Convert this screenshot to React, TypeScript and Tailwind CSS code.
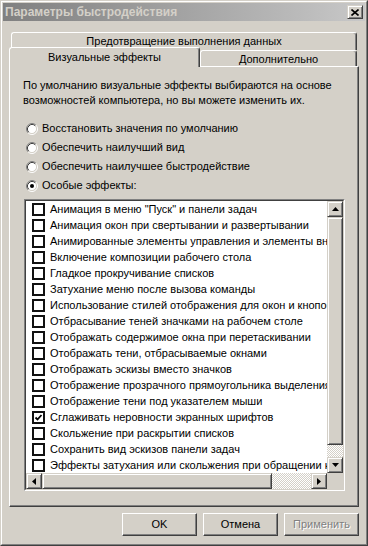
import React from "react";

const raisedBtn =
  "border border-t-white border-l-white border-r-[#404040] border-b-[#404040] shadow-[inset_-1px_-1px_#808080]";
const raisedBar =
  "border border-t-[#d4d0c8] border-l-[#d4d0c8] border-r-[#404040] border-b-[#404040] shadow-[inset_1px_1px_#ffffff,inset_-1px_-1px_#808080]";
const dither =
  "bg-[image:repeating-conic-gradient(#ffffff_0%_25%,#d4d0c8_0%_50%)] bg-[length:2px_2px]";

const items: [string, boolean][] = [
  ["Анимация в меню \"Пуск\" и панели задач", false],
  ["Анимация окон при свертывании и развертывании", false],
  ["Анимированные элементы управления и элементы внутри окна", false],
  ["Включение композиции рабочего стола", false],
  ["Гладкое прокручивание списков", false],
  ["Затухание меню после вызова команды", false],
  ["Использование стилей отображения для окон и кнопок", false],
  ["Отбрасывание теней значками на рабочем столе", false],
  ["Отображать содержимое окна при перетаскивании", false],
  ["Отображать тени, отбрасываемые окнами", false],
  ["Отображать эскизы вместо значков", false],
  ["Отображение прозрачного прямоугольника выделения", false],
  ["Отображение тени под указателем мыши", false],
  ["Сглаживать неровности экранных шрифтов", true],
  ["Скольжение при раскрытии списков", false],
  ["Сохранить вид эскизов панели задач", false],
  ["Эффекты затухания или скольжения при обращении к меню", false],
];

function Radio({ checked }: { checked?: boolean }) {
  const a = 3.89;
  const b = 3.18;
  return (
    <svg width="12" height="12" viewBox="0 0 12 12" className="shrink-0">
      <circle cx="6" cy="6" r="4.5" fill="#ffffff" />
      <path d={`M${6 - a} ${6 + a} A5.5 5.5 0 0 1 ${6 + a} ${6 - a}`} fill="none" stroke="#808080" strokeWidth="1" />
      <path d={`M${6 + a} ${6 - a} A5.5 5.5 0 0 1 ${6 - a} ${6 + a}`} fill="none" stroke="#ffffff" strokeWidth="1" />
      <path d={`M${6 - b} ${6 + b} A4.5 4.5 0 0 1 ${6 + b} ${6 - b}`} fill="none" stroke="#404040" strokeWidth="1" />
      <path d={`M${6 + b} ${6 - b} A4.5 4.5 0 0 1 ${6 - b} ${6 + b}`} fill="none" stroke="#d4d0c8" strokeWidth="1" />
      {checked && <circle cx="6" cy="6" r="2" fill="#000000" />}
    </svg>
  );
}

function Check({ checked }: { checked: boolean }) {
  return (
    <div className="w-[13px] h-[13px] shrink-0 border-2 border-[#111111] bg-white flex items-center justify-center">
      {checked && (
        <svg width="9" height="9" viewBox="0 0 9 9">
          <path d="M1.5 4.5 L3.5 6.5 L7.5 2" fill="none" stroke="#000" strokeWidth="1.8" />
        </svg>
      )}
    </div>
  );
}

function Arrow({ dir }: { dir: "up" | "down" | "left" | "right" }) {
  const pts =
    dir === "up"
      ? "0,4 7,4 3.5,0"
      : dir === "down"
      ? "0,0 7,0 3.5,4"
      : dir === "left"
      ? "4,0 4,7 0,3.5"
      : "0,0 0,7 4,3.5";
  const w = dir === "up" || dir === "down" ? 7 : 4;
  const h = dir === "up" || dir === "down" ? 4 : 7;
  return (
    <svg width={w} height={h} viewBox={`0 0 ${w} ${h}`}>
      <polygon points={pts} fill="#000" />
    </svg>
  );
}

function SBtn({ dir }: { dir: "up" | "down" | "left" | "right" }) {
  return (
    <div className={`w-[16px] h-[16px] shrink-0 bg-[#d4d0c8] flex items-center justify-center ${raisedBar}`}>
      <Arrow dir={dir} />
    </div>
  );
}

export default function App() {
  return (
    <div className="w-[368px] h-[546px] bg-[#d4d0c8] font-['Liberation_Sans',Arial,sans-serif] text-[11px] text-black border border-t-[#d4d0c8] border-l-[#d4d0c8] border-r-[#404040] border-b-[#404040] overflow-hidden">
      <div className="w-full h-full border border-t-white border-l-white border-r-[#808080] border-b-[#808080] p-px flex flex-col">
        {/* Title bar */}
        <div className="h-[18px] shrink-0 bg-linear-to-r from-[#808080] to-[#c8c8c8] flex items-center pl-[2px] pr-[2px]">
          <span className="font-bold text-[#d4d0c8] text-[12px] leading-none flex-1">Параметры быстродействия</span>
          <div className={`w-[16px] h-[14px] bg-[#d4d0c8] flex items-center justify-center ${raisedBar}`}>
            <svg width="8" height="7" viewBox="0 0 8 7">
              <path d="M0.5 0.5 L7.5 6.5 M7.5 0.5 L0.5 6.5" stroke="#000" strokeWidth="1.6" fill="none" />
            </svg>
          </div>
        </div>

        {/* Body */}
        <div className="flex-1 flex flex-col px-[6px]">
          {/* Back tab row */}
          <div className="mt-[11px] px-[2px]">
            <div className="h-[18px] border-t border-l border-t-white border-l-white border-r border-r-[#404040] shadow-[inset_-1px_0_#808080] rounded-t-[3px] flex items-start justify-center pt-[2px]">
              <span className="leading-[13px]">Предотвращение выполнения данных</span>
            </div>
          </div>
          {/* Front tab row */}
          <div className="-mt-[3px] h-[19px] flex items-end relative z-10 pr-[2px]">
            <div className="w-[191px] h-[20px] -mb-px bg-[#d4d0c8] border-t border-l border-t-white border-l-white border-r border-r-[#404040] shadow-[inset_-1px_0_#808080] rounded-t-[3px] flex items-start justify-center pt-[3px]">
              <span className="leading-[13px]">Визуальные эффекты</span>
            </div>
            <div className="flex-1 h-[16px] bg-[#d4d0c8] border-t border-l border-t-white border-l-white border-r border-r-[#404040] shadow-[inset_-1px_0_#808080] rounded-t-[3px] flex items-start justify-center pt-[2px]">
              <span className="leading-[13px]">Дополнительно</span>
            </div>
          </div>

          {/* Panel */}
          <div className="h-[441px] shrink-0 border border-t-white border-l-white border-r-[#404040] border-b-[#404040] shadow-[inset_-1px_-1px_#808080] flex flex-col pl-[13px]">
            <div className="mt-[11px] leading-[15px] whitespace-nowrap">
              <div>По умолчанию визуальные эффекты выбираются на основе</div>
              <div>возможностей компьютера, но вы можете изменить их.</div>
            </div>
            <div className="mt-[11px] flex flex-col pl-[3px]">
              {[
                ["Восстановить значения по умолчанию", false],
                ["Обеспечить наилучший вид", false],
                ["Обеспечить наилучшее быстродействие", false],
                ["Особые эффекты:", true],
              ].map(([label, c]) => (
                <div key={label as string} className="h-[19px] flex items-center gap-[4px]">
                  <Radio checked={c as boolean} />
                  <span>{label as string}</span>
                </div>
              ))}
            </div>

            {/* List box */}
            <div className="mt-[4px] ml-px w-[321px] h-[292px] border border-t-[#808080] border-l-[#808080] border-r-white border-b-white">
              <div className="w-full h-full border border-t-[#404040] border-l-[#404040] border-r-[#d4d0c8] border-b-[#d4d0c8] bg-white flex flex-col">
                <div className="flex h-[272px]">
                  <div className="w-[301px] overflow-hidden flex flex-col">
                    {items.map(([t, c]) => (
                      <div key={t} className="h-[16px] shrink-0 flex items-center pl-[6px] whitespace-nowrap">
                        <Check checked={c} />
                        <span className="ml-[5px]">{t}</span>
                      </div>
                    ))}
                  </div>
                  <div className="w-[16px] flex flex-col">
                    <SBtn dir="up" />
                    <div className={`h-[228px] shrink-0 bg-[#d4d0c8] ${raisedBar}`} />
                    <div className={`flex-1 ${dither}`} />
                    <SBtn dir="down" />
                  </div>
                </div>
                <div className="flex h-[16px]">
                  <SBtn dir="left" />
                  <div className={`w-[230px] h-[16px] shrink-0 bg-[#d4d0c8] ${raisedBar}`} />
                  <div className={`flex-1 ${dither}`} />
                  <SBtn dir="right" />
                  <div className="w-[16px] h-[16px] bg-[#d4d0c8]" />
                </div>
              </div>
            </div>
          </div>

          {/* Buttons */}
          <div className="mt-[6px] flex justify-end gap-[6px]">
            <div className={`w-[75px] h-[23px] bg-[#d4d0c8] flex items-center justify-center ${raisedBtn}`}>OK</div>
            <div className={`w-[75px] h-[23px] bg-[#d4d0c8] flex items-center justify-center ${raisedBtn}`}>Отмена</div>
            <div className={`w-[75px] h-[23px] bg-[#d4d0c8] flex items-center justify-center ${raisedBtn}`}>
              <span className="text-[#808080] [text-shadow:1px_1px_#ffffff]">Применить</span>
            </div>
          </div>
        </div>
      </div>
    </div>
  );
}
